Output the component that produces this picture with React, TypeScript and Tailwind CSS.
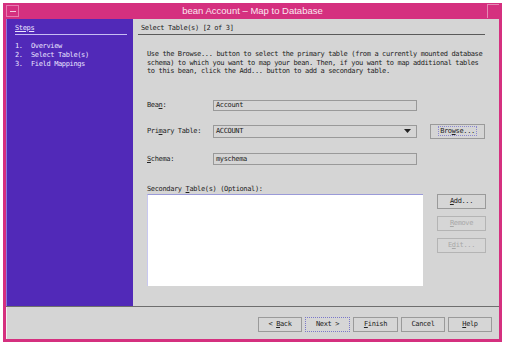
import React from "react";

const mono = { fontFamily: '"DejaVu Sans Mono", "Liberation Mono", monospace' };

function Btn({ children, w, disabled, focus }: { children: React.ReactNode; w: string; disabled?: boolean; focus?: boolean }) {
  return (
    <div
      className={`${w} h-[15px] flex items-center justify-center border ${
        focus ? "border-[#7a78c8] border-dotted" : disabled ? "border-[#b4b4b4]" : "border-[#9a9a9a]"
      } bg-[#d6d6d6] ${disabled ? "text-[#a8a8a8]" : "text-[#222]"}`}
    >
      {children}
    </div>
  );
}

export default function App() {
  return (
    <div className="w-[531px] h-[345px] bg-white pt-[3px] pl-[3px] text-[7px] tracking-[-0.36px]" style={mono}>
      <div className="w-[499px] h-[339px] bg-[#d5307f] flex flex-col px-[3px] pb-[3px]">
        {/* title bar */}
        <div className="h-[16px] flex items-center relative">
          <div className="w-[13px] h-[12px] border border-[#e77ab0] flex items-center justify-center">
            <div className="w-[6px] h-[1px] bg-[#f3c8dd]" />
          </div>
          <div
            className="flex-1 text-center text-[9.5px] tracking-normal text-[#fbe6f0] pr-[13px] leading-none"
            style={{ fontFamily: '"Liberation Sans", Arial, sans-serif' }}
          >
            bean Account – Map to Database
          </div>
          <div className="absolute right-[0px] top-[1px] w-[12px] h-[14px] border-l border-t border-[#e58ab5]" />
        </div>
        {/* body */}
        <div className="flex-1 bg-[#d5d5d5] flex flex-col">
          <div className="h-[288px] flex border-b border-[#6e6e6e]">
            {/* sidebar */}
            <div className="w-[127px] bg-[#5129b8] text-[#eae4ff] pl-[8px] pr-[6px] border-l border-[#8a78d8]">
              <div className="h-[16px] flex items-end pb-[1px] border-b border-[#c7bdf3]">
                <span className="underline">Steps</span>
              </div>
              <div className="mt-[7px] leading-[9px]">
                <div className="flex"><span className="w-[16px]">1.</span><span>Overview</span></div>
                <div className="flex"><span className="w-[16px]">2.</span><span>Select Table(s)</span></div>
                <div className="flex"><span className="w-[16px]">3.</span><span>Field Mappings</span></div>
              </div>
            </div>
            {/* content */}
            <div className="flex-1 text-[#222] pl-[5px]">
              <div className="w-[347px] h-[16px] flex items-end pb-[1px] pl-[3px] border-b border-[#5a5a5a]">
                Select Table(s) [2 of 3]
              </div>
              <div className="ml-[9px] mt-[15px] h-[26px] leading-[8.5px] w-[345px]">
                <div>Use the Browse... button to select the primary table (from a currently mounted database</div>
                <div>schema) to which you want to map your bean. Then, if you want to map additional tables</div>
                <div>to this bean, click the Add... button to add a secondary table.</div>
              </div>
              {/* Bean row */}
              <div className="ml-[9px] mt-[24px] flex items-center h-[11px]">
                <div className="w-[66px]">Bea<span className="underline">n</span>:</div>
                <div className="w-[204px] h-[11px] border border-[#999] flex items-center pl-[2px]">Account</div>
              </div>
              {/* Primary table row */}
              <div className="ml-[9px] mt-[13px] flex items-center h-[14px]">
                <div className="w-[66px]">Pri<span className="underline">m</span>ary Table:</div>
                <div className="w-[204px] h-[13px] border border-[#999] flex items-center pl-[2px] pr-[5px] justify-between">
                  <span>ACCOUNT</span>
                  <svg width="7" height="4" viewBox="0 0 7 4"><path d="M0 0 H7 L3.5 4 Z" fill="#222" /></svg>
                </div>
                <div className="ml-[13px]">
                  <div className="w-[55px] h-[15px] border border-[#9a9a9a] flex items-center justify-center">
                    <span className="border border-dotted border-[#8b88d0] px-[1px] leading-[8px]">
                      Bro<span className="underline">w</span>se...
                    </span>
                  </div>
                </div>
              </div>
              {/* Schema row */}
              <div className="ml-[9px] mt-[15px] flex items-center h-[12px]">
                <div className="w-[66px]"><span className="underline">S</span>chema:</div>
                <div className="w-[204px] h-[12px] border border-[#999] flex items-center pl-[2px]">myschema</div>
              </div>
              {/* Secondary */}
              <div className="ml-[9px] mt-[20px] h-[9px] leading-[9px]">
                Secondary <span className="underline">T</span>able(s) (Optional):
              </div>
              <div className="ml-[9px] flex">
                <div className="w-[276px] h-[92px] bg-white border-t border-dotted border-[#9a9ad8] border-l-[#c8c8f0] border-l border-solid" />
                <div className="ml-[14px] flex flex-col gap-[7px]">
                  <Btn w="w-[49px]"><span><span className="underline">A</span>dd...</span></Btn>
                  <Btn w="w-[49px]" disabled><span><span className="underline">R</span>emove</span></Btn>
                  <Btn w="w-[49px]" disabled><span>E<span className="underline">d</span>it...</span></Btn>
                </div>
              </div>
            </div>
          </div>
          {/* bottom buttons */}
          <div className="flex-1 flex justify-end items-start pt-[10px] pr-[7px] gap-[3px] border-l border-[#f0f0f0]">
            <Btn w="w-[44px]"><span>&lt; <span className="underline">B</span>ack</span></Btn>
            <Btn w="w-[45px]" focus><span>Next &gt;</span></Btn>
            <Btn w="w-[45px]"><span><span className="underline">F</span>inish</span></Btn>
            <Btn w="w-[44px]"><span>Cancel</span></Btn>
            <Btn w="w-[44px]"><span><span className="underline">H</span>elp</span></Btn>
          </div>
        </div>
      </div>
    </div>
  );
}
